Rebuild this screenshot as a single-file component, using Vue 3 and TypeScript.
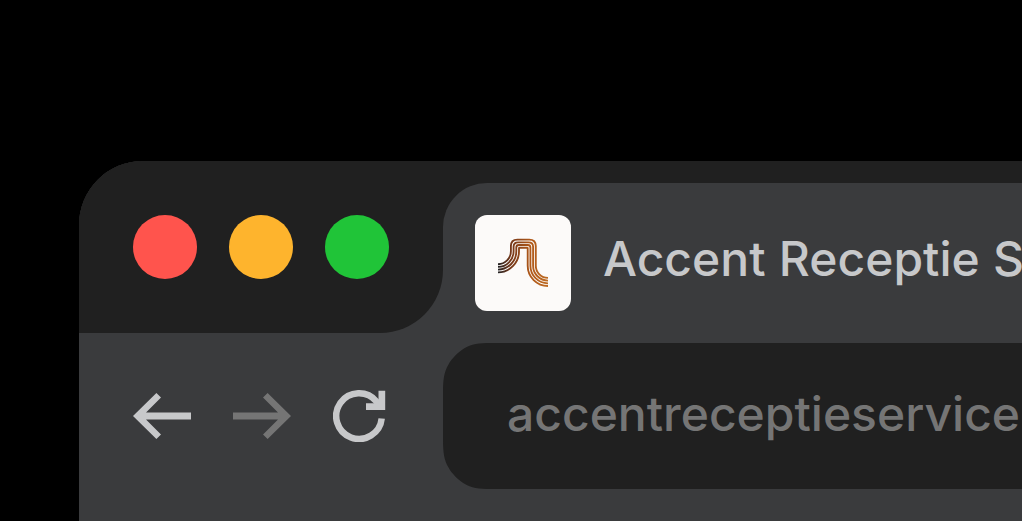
<script setup lang="ts">
const title = 'Accent Receptie S'
const address = 'accentreceptieservice'
const lights: string[] = ['close', 'minimise', 'expand']

// Concentric ribbons of the favicon, from the outer one to the inner one.
const ribbons: string[] = [0, 1, 2, 3].map((i) => {
  const step = 2.7 * i
  const left = 35.9 + step
  const right = 60.8 - step
  const top = 24.6 + step
  const corner = Math.max(6.5 - 2 * i, 0.5)
  const rl = left - 23
  const rr = 73 - right
  return `M23 ${49.2 + step}A${rl} ${rl} 0 0 0 ${left} 36.3V${top + corner}` +
    `Q${left} ${top} ${left + corner} ${top}H${right - corner}Q${right} ${top} ${right} ${top + corner}` +
    `V50.7A${rr} ${rr} 0 0 0 73 ${50.7 + rr}`
})
</script>

<template>
  <main class="stage">
    <div class="window">
      <header class="strip">
        <div class="lights">
          <span v-for="light in lights" :key="light" class="light" :class="light"></span>
        </div>
        <div class="tab">
          <svg class="favicon" viewBox="0 0 96 96">
            <defs>
              <linearGradient id="copper" gradientUnits="userSpaceOnUse" x1="23" y1="0" x2="73" y2="0">
                <stop offset="0" stop-color="#222225" />
                <stop offset="0.25" stop-color="#74371a" />
                <stop offset="0.65" stop-color="#b0591a" />
                <stop offset="1" stop-color="#bd6b24" />
              </linearGradient>
            </defs>
            <path v-for="d in ribbons" :key="d" :d="d" fill="none" stroke="url(#copper)" stroke-width="1.85" />
          </svg>
          <span class="title">{{ title }}</span>
        </div>
      </header>
      <div class="toolbar">
        <nav class="controls">
          <svg class="icon" viewBox="0 0 58 52">
            <path d="M0 26L23.4 2.9L28 7.5L13 22.5H58V29.5H13L28 44.5L23.4 49.1Z" />
          </svg>
          <svg class="icon muted" viewBox="0 0 58 52">
            <path d="M58 26L34.6 2.9L30 7.5L45 22.5H0V29.5H45L30 44.5L34.6 49.1Z" />
          </svg>
          <svg class="icon" viewBox="0 0 58 52">
            <path d="M48.7 28.5A22.8 22.8 0 1 1 43.5 11.5L47 16" fill="none" stroke="currentColor" stroke-width="6.5" />
            <path d="M45.5 .8H52.2V20H33V13.3H45.5Z" />
          </svg>
        </nav>
        <div class="address"><span>{{ address }}</span></div>
      </div>
    </div>
  </main>
</template>

<style>
body {
  margin: 0;
  background: #000;
  overflow: hidden;
}
</style>

<style scoped>
.stage {
  box-sizing: border-box;
  width: 1022px;
  height: 521px;
  padding: 161px 0 0 79px;
  overflow: hidden;
  background: #000;
  font-family: Inter, "Liberation Sans", sans-serif;
  font-size: 48px;
  font-weight: 500;
  line-height: 58px;
  white-space: nowrap;
}
.window {
  height: 360px;
  border-top-left-radius: 64px;
  overflow: hidden;
  background: #3a3b3d;
}
.strip {
  display: flex;
  height: 172px;
  background: linear-gradient(#202020 80px, #3a3b3d 80px);
}
.lights {
  box-sizing: border-box;
  display: flex;
  flex: none;
  gap: 32px;
  width: 364px;
  padding: 54px 0 0 54px;
  border-bottom-right-radius: 63px;
  background: #202020;
}
.light {
  width: 64px;
  height: 64px;
  border-radius: 50%;
}
.close { background: #ff544d; }
.minimise { background: #feb42d; }
.expand { background: #20c438; }
.tab {
  box-sizing: border-box;
  display: flex;
  flex: 1;
  min-width: 0;
  gap: 32px;
  margin-top: 22px;
  padding: 32px 0 0 32px;
  border-top-left-radius: 44px;
  background: #3a3b3d;
  color: #c7c8ca;
}
.favicon {
  flex: none;
  width: 96px;
  height: 96px;
  border-radius: 12px;
  background: #fcfaf9;
}
.title {
  margin-top: 15px;
  word-spacing: 0.6px;
}
.toolbar {
  display: flex;
  height: 188px;
}
.controls {
  box-sizing: border-box;
  display: flex;
  flex: none;
  gap: 42px;
  width: 364px;
  padding: 57px 0 0 54px;
  color: #c7c8ca;
}
.icon {
  display: block;
  width: 58px;
  height: 52px;
  fill: currentColor;
}
.muted { color: #757575; }
.address {
  box-sizing: border-box;
  flex: 1;
  min-width: 0;
  height: 146px;
  margin-top: 10px;
  padding: 42px 0 0 64px;
  background: #202020;
  color: #757575;
  clip-path: path("M48 0C36 0 28 1 21 5.5C15 9.5 9 15 5.5 21.5C1 29 0 37 0 49V97C0 109 1 117 5.5 124.5C9 131 15 136.5 21 140.5C28 145 36 146 48 146H600V0Z");
}
</style>
